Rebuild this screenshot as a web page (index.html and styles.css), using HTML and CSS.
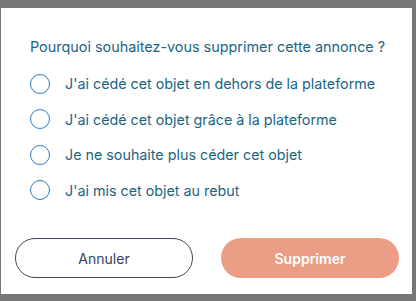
FILE: index.html
```html
<!DOCTYPE html>
<html lang="fr">
<head>
  <meta charset="UTF-8" />
  <meta name="viewport" content="width=device-width, initial-scale=1.0"/>
  <title>Supprimer l'annonce</title>
  <link rel="stylesheet" href="styles.css">
</head>
<body>

  <!-- Modal -->
  <div class="modal">
    <p class="question">Pourquoi souhaitez-vous supprimer cette annonce ?</p>

    <ul class="reasons">
      <li class="reason"><span class="radio"></span>J'ai cédé cet objet en dehors de la plateforme</li>
      <li class="reason"><span class="radio"></span>J'ai cédé cet objet grâce à la plateforme</li>
      <li class="reason"><span class="radio"></span>Je ne souhaite plus céder cet objet</li>
      <li class="reason"><span class="radio"></span>J'ai mis cet objet au rebut</li>
    </ul>

    <div class="actions">
      <button class="btn btn-cancel">Annuler</button>
      <button class="btn btn-delete">Supprimer</button>
    </div>
  </div>

</body>
</html>
```

FILE: styles.css
```css
body {
  margin: 0;
  height: 301px;
  background-color: #777777;
  font-family: Inter, "Noto Sans", Arial, sans-serif;
  overflow: hidden;
}

.modal {
  background-color: #ffffff;
  margin: 8px 4px 0 1px;
  height: 286px;
  box-sizing: border-box;
  padding: 29px 13px 0 14px;
}

.question {
  margin: 0 0 0 15px;
  font-size: 14.4px;
  line-height: 20px;
  color: #1b6584;
}

.reasons {
  list-style: none;
  margin: 9px 0 0 0;
  padding: 0 0 0 15px;
}

.reason {
  display: flex;
  align-items: center;
  height: 35.5px;
  font-size: 14.3px;
  color: #1b6584;
}

.radio {
  width: 18px;
  height: 18px;
  border: 1.5px solid #2a7cc1;
  border-radius: 50%;
  margin-right: 15px;
  flex-shrink: 0;
}

.actions {
  display: flex;
  justify-content: space-between;
  margin-top: 30px;
}

.btn {
  width: 178px;
  height: 40px;
  border-radius: 20px;
  font-family: Inter, "Noto Sans", Arial, sans-serif;
  font-size: 14px;
  cursor: pointer;
}

.btn-cancel {
  background-color: #ffffff;
  border: 1px solid #44465a;
  color: #3b3f5c;
}

.btn-delete {
  background-color: #eb9e85;
  border: none;
  color: #ffffff;
  font-weight: 600;
}
```
